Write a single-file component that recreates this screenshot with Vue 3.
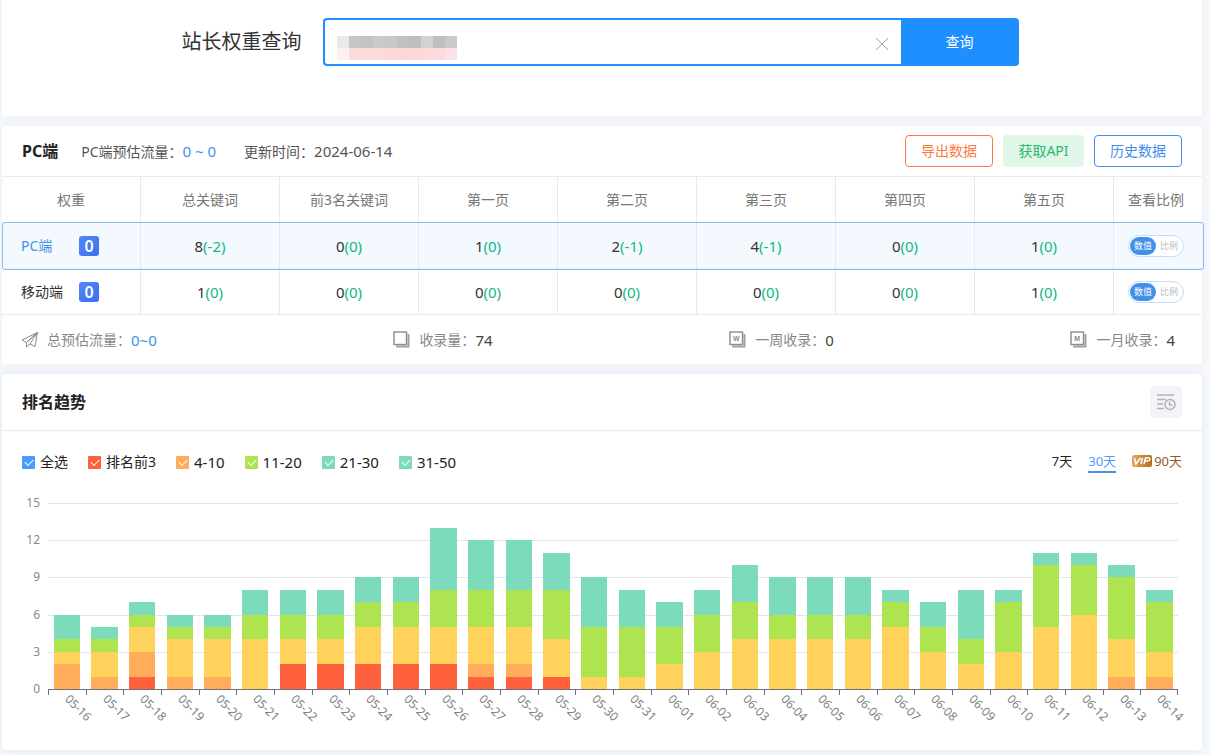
<script setup>
import { ref, reactive } from 'vue'

const domain = ref('')
const mosaic = ['#ebeae8', '#c5c5c7', '#c4c4c6', '#cac9cb', '#c8c8c9', '#c0c0c0', '#bebfbe', '#d4d1d3', '#bfbfc0', '#c9c9ca',
  '#fdf0f1', '#fedbdb', '#fddbdb', '#fddadb', '#fcd8d9', '#fcd7d8', '#fdd8d8', '#fdd9d9', '#fddadb', '#fce2e6']

const columns = ['权重', '总关键词', '前3名关键词', '第一页', '第二页', '第三页', '第四页', '第五页', '查看比例']
const rows = [
  { name: 'PC端', active: true, cells: [['8', '(-2)'], ['0', '(0)'], ['1', '(0)'], ['2', '(-1)'], ['4', '(-1)'], ['0', '(0)'], ['1', '(0)']] },
  { name: '移动端', active: false, cells: [['1', '(0)'], ['0', '(0)'], ['0', '(0)'], ['0', '(0)'], ['0', '(0)'], ['0', '(0)'], ['1', '(0)']] },
]

const legend = reactive([
  { label: '全选', cls: 'c-all', on: true },
  { label: '排名前3', cls: 'c-top', on: true },
  { label: '4-10', cls: 'c-ten', on: true, num: true },
  { label: '11-20', cls: 'c-twenty', on: true, num: true },
  { label: '21-30', cls: 'c-thirty', on: true, num: true },
  { label: '31-50', cls: 'c-thirty', on: true, num: true },
])

const maxRank = 15
const ticks = [15, 12, 9, 6, 3, 0]
const layers = ['s-red', 's-orange', 's-yellow', 's-green', 's-teal']
const days = [
  ['05-16', 0, 2, 1, 1, 2], ['05-17', 0, 1, 2, 1, 1], ['05-18', 1, 2, 2, 1, 1], ['05-19', 0, 1, 3, 1, 1],
  ['05-20', 0, 1, 3, 1, 1], ['05-21', 0, 0, 4, 2, 2], ['05-22', 2, 0, 2, 2, 2], ['05-23', 2, 0, 2, 2, 2],
  ['05-24', 2, 0, 3, 2, 2], ['05-25', 2, 0, 3, 2, 2], ['05-26', 2, 0, 3, 3, 5], ['05-27', 1, 1, 3, 3, 4],
  ['05-28', 1, 1, 3, 3, 4], ['05-29', 1, 0, 3, 4, 3], ['05-30', 0, 0, 1, 4, 4], ['05-31', 0, 0, 1, 4, 3],
  ['06-01', 0, 0, 2, 3, 2], ['06-02', 0, 0, 3, 3, 2], ['06-03', 0, 0, 4, 3, 3], ['06-04', 0, 0, 4, 2, 3],
  ['06-05', 0, 0, 4, 2, 3], ['06-06', 0, 0, 4, 2, 3], ['06-07', 0, 0, 5, 2, 1], ['06-08', 0, 0, 3, 2, 2],
  ['06-09', 0, 0, 2, 2, 4], ['06-10', 0, 0, 3, 4, 1], ['06-11', 0, 0, 5, 5, 1], ['06-12', 0, 0, 6, 4, 1],
  ['06-13', 0, 1, 3, 5, 1], ['06-14', 0, 1, 2, 4, 1],
].map(([date, ...values]) => ({ date, values }))
</script>

<template>
  <main class="page">
    <section class="card search-card">
      <label class="search-title" for="domain">站长权重查询</label>
      <form class="search" @submit.prevent>
        <div class="field">
          <span class="mosaic" aria-hidden="true">
            <i v-for="(c, i) in mosaic" :key="i" :style="{ background: c }"></i>
          </span>
          <input id="domain" v-model="domain" type="text" autocomplete="off" />
          <button class="clear" type="button" aria-label="清空" @click="domain = ''">
            <svg width="14" height="14" viewBox="0 0 14 14"><path d="M1 1l12 12M13 1L1 13" stroke="#a5a5a5" fill="none" /></svg>
          </button>
        </div>
        <button class="submit" type="submit">查询</button>
      </form>
    </section>

    <section class="card">
      <header class="data-head">
        <h2>PC端</h2>
        <p class="flow">PC端预估流量：<a href="#">0 ~ 0</a></p>
        <p>更新时间：<span class="num">2024-06-14</span></p>
        <div class="actions">
          <button class="btn export" type="button">导出数据</button>
          <button class="btn api" type="button">获取API</button>
          <button class="btn history" type="button">历史数据</button>
        </div>
      </header>
      <table>
        <thead>
          <tr><th v-for="c in columns" :key="c" scope="col">{{ c }}</th></tr>
        </thead>
        <tbody>
          <tr v-for="r in rows" :key="r.name" :class="{ active: r.active }">
            <td class="name"><div><span class="label">{{ r.name }}</span><b class="weight">0</b></div></td>
            <td v-for="(c, i) in r.cells" :key="i" class="num">{{ c[0] }}<span class="delta">{{ c[1] }}</span></td>
            <td>
              <div class="switch">
                <button class="on" type="button">数值</button><button type="button">比例</button>
              </div>
            </td>
          </tr>
        </tbody>
      </table>
      <footer class="stats">
        <p>
          <svg width="18" height="18" viewBox="0 0 18 18" fill="none" stroke="#8b8b8b" stroke-linejoin="round">
            <path d="M16.5 1.500L1 9l4.500 2.500zM16.500 1.500L14 15.500l-5-2.500zM16.500 1.500L5.500 11.500V16L9 13" />
          </svg>
          总预估流量：<a href="#">0~0</a>
        </p>
        <p v-for="s in [['', '收录量：', '74'], ['W', '一周收录：', '0'], ['M', '一月收录：', '4']]" :key="s[1]">
          <svg width="18" height="18" viewBox="0 0 18 18" fill="none" stroke="#8b8b8b">
            <path d="M15.500 3v12.500H3" stroke-width="2" stroke="#a0a0a0" />
            <rect x="1" y="1" width="12.500" height="12.500" stroke-width="1.400" fill="#fff" />
            <text v-if="s[0]" x="7.200" y="10" text-anchor="middle" class="glyph">{{ s[0] }}</text>
          </svg>
          {{ s[1] }}<strong>{{ s[2] }}</strong>
        </p>
      </footer>
    </section>

    <section class="card trend">
      <header class="trend-head">
        <h2>排名趋势</h2>
        <button class="records" type="button" aria-label="记录">
          <svg width="20" height="18" viewBox="0 0 20 18" fill="none" stroke="#b3b3b8" stroke-width="1.500">
            <path d="M1 2h17M1 6.500h9M1 11h6M1 15.500h7" />
            <circle cx="14" cy="11.500" r="5" />
            <path d="M13.500 8.500v3.500h3" />
          </svg>
        </button>
      </header>
      <div class="toolbar">
        <div class="legend">
          <label v-for="l in legend" :key="l.label" :class="{ num: l.num }"><input v-model="l.on" type="checkbox" :class="l.cls" />{{ l.label }}</label>
        </div>
        <nav class="range">
          <button type="button">7天</button>
          <button type="button" class="current">30天</button>
          <button type="button" class="vip">
            <svg width="20" height="12" viewBox="0 0 20 12">
              <defs><linearGradient id="gold"><stop offset="0" stop-color="#e2a95f" /><stop offset="1" stop-color="#b8701b" /></linearGradient></defs>
              <rect width="20" height="12" rx="2" fill="url(#gold)" />
              <path d="M2.500 3l1.500 6L8.500 3M10.500 3L9 9M12 9l1.500-6h3.500q1 0 .8 1.500T16 6h-3" fill="none" stroke="#fff" stroke-width="1.500" />
            </svg>90天
          </button>
        </nav>
      </div>
      <div class="chart">
        <div class="y-axis"><span v-for="t in ticks" :key="t">{{ t }}</span></div>
        <div class="plot">
          <div class="grid"><i v-for="t in ticks" :key="t"></i></div>
          <div v-for="d in days" :key="d.date" class="day">
            <div class="bar">
              <i v-for="(v, i) in d.values" :key="i" :class="layers[i]" :style="{ height: (v / maxRank) * 100 + '%' }"></i>
            </div>
            <span class="date-label">{{ d.date }}</span>
          </div>
        </div>
      </div>
    </section>
  </main>
</template>

<style>
body {
  background: #f6f8fb;
}
</style>

<style scoped>
* {
  box-sizing: border-box;
}
.page {
  display: flex;
  flex-direction: column;
  gap: 10px;
  padding: 0 8px 5px 2px;
  overflow: hidden;
  color: #333;
  font: 14px/20px "Noto Sans", "Noto Sans CJK SC", sans-serif;
}
h2, p {
  margin: 0;
}
button {
  padding: 0;
  border: 0;
  background: none;
  color: inherit;
  font: inherit;
  cursor: pointer;
}
a {
  color: #4390e9;
  font-size: 15px;
  text-decoration: none;
}
.num {
  font-size: 15px;
}
.card {
  border-radius: 4px;
  background: #fff;
  box-shadow: 0 0 10px #e9eef2;
}
.search-card {
  display: flex;
  justify-content: center;
  align-items: flex-start;
  gap: 21px;
  padding: 18px 22px 50px 18px;
  border-radius: 0 0 4px 4px;
}
.search-title {
  font-size: 20px;
  line-height: 48px;
  white-space: nowrap;
}
.search {
  display: flex;
  width: 60%;
  height: 48px;
}
.field {
  display: flex;
  flex: 1;
  align-items: center;
  padding: 0 12px;
  border: 2px solid #1e8fff;
  border-right: 0;
  border-radius: 4px 0 0 4px;
}
.mosaic {
  display: grid;
  grid-template-columns: repeat(10, 12px);
  grid-auto-rows: 12px;
  align-self: flex-start;
  margin-top: 16px;
}
.field input {
  flex: 1;
  min-width: 0;
  border: 0;
  outline: 0;
  background: none;
  font: inherit;
}
.clear {
  display: flex;
  padding-top: 4px;
}
.submit {
  width: 118px;
  border-radius: 0 4px 4px 0;
  background: #1e8fff;
  color: #fff;
}
.data-head {
  display: flex;
  align-items: center;
  height: 50px;
  padding: 0 20px;
  color: #555;
}
.data-head h2 {
  margin-right: 23px;
}
h2 {
  color: #222;
  font-size: 16px;
  font-weight: 700;
}
.flow {
  margin-right: 28px;
}
.actions {
  display: flex;
  gap: 10px;
  margin-left: auto;
}
.btn {
  height: 32px;
  padding: 0 15px;
  border: 1px solid;
  border-radius: 4px;
}
.export {
  color: #ff7a3d;
}
.api {
  min-width: 81px;
  border: 0;
  background: #dff6e8;
  color: #2abb6b;
}
.history {
  color: #3e8eea;
}
table {
  width: 100%;
  table-layout: fixed;
  border-collapse: separate;
  border-spacing: 0;
}
th, td {
  height: 46px;
  padding: 0;
  border-top: 1px solid #ebebeb;
  border-right: 1px solid #e8e9ec;
  text-align: center;
}
th {
  color: #777;
  font-weight: 400;
}
th:last-child,
td:last-child {
  width: 88px;
  padding-right: 4px;
  border-right: 0;
}
tr {
  position: relative;
}
.active {
  z-index: 1;
  background: #f4f9ff;
}
.active .name::after {
  position: absolute;
  inset: 0 -2px -2px 0;
  border: 1px solid #88bdf8;
  border-radius: 3px;
  content: "";
  pointer-events: none;
}
.name div {
  display: flex;
  align-items: center;
  padding-left: 19px;
}
.name .label {
  width: 58px;
  text-align: left;
}
.active .label {
  color: #4390e9;
}
.weight {
  width: 20px;
  height: 20px;
  border-radius: 3px;
  background: linear-gradient(135deg, #5585fb, #3970ef);
  color: #fff;
  font-size: 16px;
  font-weight: 600;
  line-height: 21px;
}
.delta {
  color: #10b981;
}
.switch {
  display: flex;
  align-items: center;
  width: 56px;
  height: 22px;
  margin: 0 auto;
  padding: 1px;
  border: 1px solid #c2defb;
  border-radius: 11px;
  background: #fff;
}
.switch button {
  flex: 1;
  height: 18px;
  border-radius: 9px;
  color: #bbb;
  font-size: 9px;
  line-height: 18px;
}
.switch .on {
  background: #4390e9;
  color: #fff;
}
.stats {
  display: flex;
  justify-content: space-between;
  align-items: center;
  height: 50px;
  padding: 0 27px 0 19px;
  border-top: 1px solid #ebebeb;
  color: #888;
}
.stats p {
  display: flex;
  align-items: center;
}
.stats svg {
  margin-right: 8px;
}
.stats strong {
  color: #444;
  font-size: 15px;
  font-weight: 400;
}
.glyph {
  fill: #888;
  stroke: none;
  font: 700 7px "Liberation Sans", sans-serif;
}
.trend {
  box-shadow: 0 0 10px #dce9f5;
}
.trend-head {
  display: flex;
  justify-content: space-between;
  align-items: center;
  height: 57px;
  padding: 0 20px;
  border-bottom: 1px solid #ebebeb;
}
.records {
  display: flex;
  justify-content: center;
  align-items: center;
  width: 32px;
  height: 32px;
  border-radius: 4px;
  background: #f3f4fa;
}
.toolbar {
  display: flex;
  justify-content: space-between;
  align-items: center;
  height: 62px;
  padding: 0 20px;
  color: #222;
}
.legend {
  display: flex;
  gap: 20px;
}
.legend label {
  display: flex;
  align-items: center;
}
.legend input {
  position: relative;
  width: 13px;
  height: 13px;
  margin: 0 5px 0 0;
  border-radius: 1px;
  appearance: none;
}
.legend input:checked::after {
  position: absolute;
  top: 3px;
  left: 3px;
  width: 7px;
  height: 4px;
  border: solid #fff;
  border-width: 0 0 1px 1px;
  content: "";
  transform: rotate(-45deg);
}
.c-all { background: #4c9bff; }
.c-top { background: #ff613d; }
.c-ten { background: #ffad5a; }
.c-twenty { background: #aee44f; }
.c-thirty { background: #7cdbba; }
.range {
  display: flex;
  align-items: center;
  gap: 16px;
  font-size: 13px;
}
.range button {
  height: 22px;
  border-bottom: 2px solid transparent;
}
.range .current {
  border-color: #4390e9;
  color: #4c9bff;
}
.range .vip {
  display: flex;
  align-items: center;
  gap: 2px;
  color: #995a26;
}
.chart {
  display: flex;
  gap: 8px;
  padding: 10px 24px 60px 20px;
}
.y-axis {
  display: flex;
  flex-direction: column;
  justify-content: space-between;
  width: 18px;
  height: 187px;
  color: #8a8a8a;
  font-size: 12px;
  text-align: right;
}
.y-axis span {
  height: 1px;
  line-height: 0;
}
.plot {
  position: relative;
  display: flex;
  flex: 1;
  height: 187px;
  padding-bottom: 1px;
}
.grid {
  position: absolute;
  inset: 0;
  display: flex;
  flex-direction: column;
  justify-content: space-between;
}
.grid i {
  height: 1px;
  background: #e0e6f1;
}
.grid i:last-child {
  background: #6e7079;
}
.day {
  position: relative;
  flex: 1;
}
.day::before,
.day:last-child::after {
  position: absolute;
  bottom: -6px;
  left: 0;
  width: 1px;
  height: 5px;
  background: #6e7079;
  content: "";
}
.day:last-child::after {
  right: 0;
  left: auto;
}
.bar {
  display: flex;
  flex-direction: column-reverse;
  width: 70%;
  height: 100%;
  margin: 0 auto;
}
.s-red { background: #ff613d; }
.s-orange { background: #ffad5a; }
.s-yellow { background: #ffd25c; }
.s-green { background: #aee44f; }
.s-teal { background: #7cdbba; }
.date-label {
  position: absolute;
  top: 100%;
  left: 50%;
  color: #808080;
  font-size: 12px;
  line-height: 16px;
  white-space: nowrap;
  transform: rotate(45deg);
  transform-origin: 0 50%;
}
</style>
